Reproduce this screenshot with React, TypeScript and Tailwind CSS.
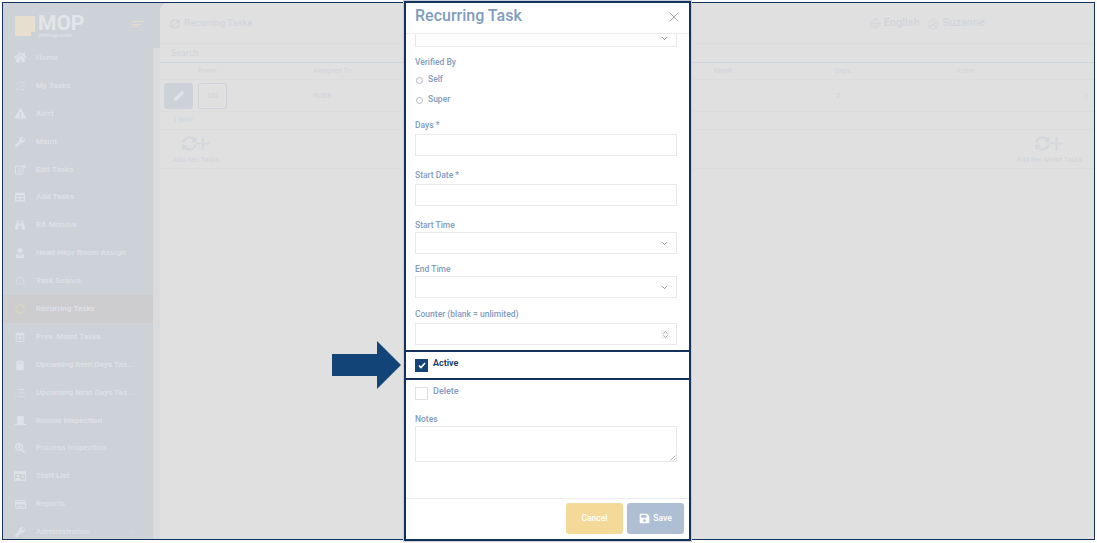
import { type ReactNode } from "react";
import { ChevronDown, ChevronRight, CircleUserRound, Globe, ListChecks, List, Search, X, ChevronsUpDown } from "lucide-react";
import {
  FaBinoculars,
  FaClipboard,
  FaDoorClosed,
  FaExclamationTriangle,
  FaHome,
  FaPen,
  FaRegCalendarPlus,
  FaRegCreditCard,
  FaRegEdit,
  FaRegIdCard,
  FaSave,
  FaSearchPlus,
  FaSyncAlt,
  FaTable,
  FaUserTie,
  FaWrench,
} from "react-icons/fa";

const NAV: { label: string; icon: ReactNode; active?: boolean; chevron?: boolean }[] = [
  { label: "Home", icon: <FaHome size={13} /> },
  { label: "My Tasks", icon: <ListChecks size={12} strokeWidth={1.5} /> },
  { label: "Alert", icon: <FaExclamationTriangle size={11} /> },
  { label: "Maint", icon: <FaWrench size={10} /> },
  { label: "Edit Tasks", icon: <FaRegEdit size={11} /> },
  { label: "Add Tasks", icon: <FaTable size={10} /> },
  { label: "RA Monitor", icon: <FaBinoculars size={10} /> },
  { label: "Head Hkpr Room Assign", icon: <FaUserTie size={10} /> },
  { label: "Task Search", icon: <Search size={11} strokeWidth={1.5} /> },
  { label: "Recurring Tasks", icon: <FaSyncAlt size={10} className="text-[#d8d4c4]" />, active: true },
  { label: "Prev. Maint Tasks", icon: <FaRegCalendarPlus size={10} /> },
  { label: "Upcoming Rent Days Tas...", icon: <FaClipboard size={10} /> },
  { label: "Upcoming Next Days Tas...", icon: <List size={12} strokeWidth={1.5} /> },
  { label: "Rooms Inspection", icon: <FaDoorClosed size={11} /> },
  { label: "Process Inspection", icon: <FaSearchPlus size={10} /> },
  { label: "Staff List", icon: <FaRegIdCard size={12} /> },
  { label: "Reports", icon: <FaRegCreditCard size={11} /> },
  { label: "Administration", icon: <FaWrench size={10} />, chevron: true },
];

function Sidebar() {
  return (
    <aside className="flex w-[157px] shrink-0 flex-col bg-[#cdd2d9]">
      <div className="flex h-[41px] shrink-0 items-start pl-3 pt-[13px]">
        <div className="relative h-[20px] w-[20px] bg-[#e6dfcf]">
          <div className="absolute bottom-0 right-0 h-[4px] w-[4px] bg-[#cdd2d9]" />
        </div>
        <div className="ml-[3px] flex flex-col">
          <span className="text-[21px] font-bold leading-[15px] text-[#e3e5e8]">MOP</span>
          <span className="mt-[1px] text-[6px] leading-[6px] text-[#e3e5e8]">vmmop.com</span>
        </div>
        <div className="ml-[48px] mt-[5px] flex flex-col gap-[1.5px]">
          <div className="h-px w-[11px] bg-[#e0dcc8]" />
          <div className="h-px w-[9px] bg-[#e0dcc8]" />
          <div className="h-px w-[6px] bg-[#e0dcc8]" />
        </div>
      </div>
      <div className="flex min-h-0 flex-1">
        <nav className="w-[150px]">
          {NAV.map((item) => (
            <div
              key={item.label}
              className={`flex h-[27.9px] items-center ${item.active ? "bg-[#cdcdcf]" : ""}`}
            >
              <span className="flex w-[33px] shrink-0 justify-center pl-[1px] text-[#dfe2e6]">{item.icon}</span>
              <span className="truncate text-[8px] font-medium tracking-[0.1px] text-[#dfe2e6]">{item.label}</span>
              {item.chevron && <ChevronDown size={9} className="ml-[38px] text-[#d8dbe0]" />}
            </div>
          ))}
        </nav>
        <div className="mt-[4px] w-[7px] bg-[#dadbdc]" />
      </div>
    </aside>
  );
}

function RecIcon() {
  return (
    <div className="flex h-[16px] items-center text-[#d3d7dd]">
      <FaSyncAlt size={15} />
      <span className="ml-[-1px] text-[26px] font-light leading-[16px]">+</span>
    </div>
  );
}

function Background() {
  return (
    <main className="flex min-w-0 flex-1 flex-col rounded-tl-[8px] bg-[#e0e0e0]">
      <div className="flex h-[41px] shrink-0 items-center border-b border-[#dcdcdc] pl-[10px] pr-[109px] pt-[1px] text-[#d0d4da]">
        <FaSyncAlt size={10} />
        <span className="ml-[4px] text-[9.5px] font-medium">Recurring Tasks</span>
        <Globe size={11} strokeWidth={1.5} className="ml-auto" />
        <span className="ml-[3px] text-[11px] font-medium">English</span>
        <CircleUserRound size={12} strokeWidth={1.5} className="ml-[7px]" />
        <span className="ml-[4px] text-[11px] font-medium">Suzanne</span>
      </div>
      <div className="flex h-[19px] shrink-0 items-center border-b border-[#d0d6df] pl-[11px] pt-[2px] text-[9px] text-[#d0d4da]">
        Search
      </div>
      <div className="grid h-[17px] shrink-0 grid-cols-[115px_401px_121px_121px_1fr] items-center border-b border-[#dcdcdc] pl-[38px] text-[7px] text-[#d0d4da]">
        <span>Room :</span>
        <span>Assigned To :</span>
        <span>Maint :</span>
        <span>Days :</span>
        <span>Active :</span>
      </div>
      <div className="grid h-[32px] shrink-0 grid-cols-[149px_523px_1fr] items-center border-b border-[#dcdcdc] pl-[4px] text-[7.5px] text-[#cfd3d9]">
        <div className="flex">
          <div className="flex h-[26px] w-[29px] items-center justify-center rounded-[3px] bg-[#cdd2d9] text-[#e2e4e7]">
            <FaPen size={10} />
          </div>
          <div className="ml-[5px] flex h-[26px] w-[29px] items-center justify-center rounded-[3px] border border-[#d0d4da]">
            102
          </div>
        </div>
        <span>RUBY</span>
        <div className="flex items-center justify-between">
          <span>2</span>
          <ChevronRight size={10} className="mr-[3px]" />
        </div>
      </div>
      <div className="flex h-[18px] shrink-0 items-center border-b border-[#dcdcdc] pl-[13px] text-[7px] text-[#d0d4da]">
        1 total
      </div>
      <div className="flex h-[39px] shrink-0 items-start justify-between border-b border-[#dcdcdc] pl-[13px] pr-[12px] pt-[5px] text-[7px] text-[#d0d4da]">
        <div className="flex flex-col items-center gap-[4px]">
          <RecIcon />
          <span>Add Rec Tasks</span>
        </div>
        <div className="flex flex-col items-center gap-[4px]">
          <RecIcon />
          <span>Add Rec Maint Tasks</span>
        </div>
      </div>
    </main>
  );
}

function Field({ label, children, className }: { label: string; children: ReactNode; className?: string }) {
  return (
    <div className={className}>
      <div className="text-[8.5px] font-medium leading-[11px] text-[#7f9cbf]">{label}</div>
      {children}
    </div>
  );
}

function Radio({ label }: { label: string }) {
  return (
    <div className="flex h-[20px] items-center pl-[1px]">
      <span className="mt-[2px] h-[7px] w-[7px] rounded-full border border-[#b5b8bc]" />
      <span className="ml-[5px] text-[8.5px] font-medium text-[#7f9cbf]">{label}</span>
    </div>
  );
}

const inputBox = "h-[22px] w-[262px] border border-[#e8e8e8] bg-white";

function Modal() {
  return (
    <div className="absolute bottom-[2px] left-[404px] top-[1px] flex w-[287px] flex-col border-2 border-[#14325c] bg-white outline-1 outline-[#c4ccd8]">
      <div className="relative h-[31px] shrink-0 border-b border-[#ececec] pl-[9px] pt-[1px]">
        <span className="text-[16px] font-medium leading-[20px] text-[#7f9cbf]">Recurring Task</span>
        <X size={16} strokeWidth={1} className="absolute right-[7px] top-[6px] text-[#8a8a8a]" />
      </div>
      <div className="flex min-h-0 flex-1 flex-col">
        <div className="ml-[9px] flex h-[13px] w-[262px] shrink-0 items-start justify-end border border-t-0 border-[#e8e8e8] pr-[7px]">
          <ChevronDown size={9} className="text-[#666]" />
        </div>
        <div className="pl-[9px]">
          <Field label="Verified By" className="mt-[10px]">
            <div className="mt-[1px]">
              <Radio label="Self" />
              <Radio label="Super" />
            </div>
          </Field>
          <Field label="Days *" className="mt-[11px]">
            <div className={`${inputBox} mt-[3px]`} />
          </Field>
          <Field label="Start Date *" className="mt-[14px]">
            <div className={`${inputBox} mt-[3px]`} />
          </Field>
          <Field label="Start Time" className="mt-[14px]">
            <div className={`${inputBox} mt-[1px] flex items-center justify-end pr-[7px]`}>
              <ChevronDown size={9} className="text-[#666]" />
            </div>
          </Field>
          <Field label="End Time" className="mt-[10px]">
            <div className={`${inputBox} mt-[1px] flex items-center justify-end pr-[7px]`}>
              <ChevronDown size={9} className="text-[#666]" />
            </div>
          </Field>
          <Field label="Counter (blank = unlimited)" className="mt-[11px]">
            <div className={`${inputBox} mt-[3px] flex items-center justify-end pr-[6px]`}>
              <ChevronsUpDown size={9} className="bg-[#f4f4f4] text-[#999]" />
            </div>
          </Field>
        </div>
        <div className="mt-[5px] flex h-[30px] shrink-0 items-start border-y-2 border-[#14325c] pl-[9px] pt-[7px]">
          <div className="flex h-[13px] w-[13px] items-center justify-center bg-[#124477] text-white">
            <svg width="8" height="7" viewBox="0 0 8 7" fill="none">
              <path d="M1 3.5 3 5.5 7 1" stroke="currentColor" strokeWidth="1.6" />
            </svg>
          </div>
          <span className="ml-[5px] mt-[-2px] text-[9px] font-semibold leading-[12px] text-[#14325c]">Active</span>
        </div>
        <div className="flex shrink-0 items-start pl-[9px] pt-[7px]">
          <div className="h-[13px] w-[13px] border border-[#e0e0e0]" />
          <span className="ml-[5px] mt-[-2px] text-[9px] font-medium leading-[12px] text-[#7f9cbf]">Delete</span>
        </div>
        <Field label="Notes" className="ml-[9px] mt-[14px]">
          <div className="relative mt-[1px] h-[36px] w-[262px] border border-[#e8e8e8]">
            <svg className="absolute bottom-0 right-0" width="6" height="6" viewBox="0 0 6 6" fill="none">
              <path d="M0.5 5.5 5.5 0.5M3.5 5.5 5.5 3.5" stroke="#999" strokeWidth="0.7" />
            </svg>
          </div>
        </Field>
      </div>
      <div className="flex h-[41px] shrink-0 items-start justify-end gap-[4px] border-t border-[#ececec] pr-[5px] pt-[4px]">
        <button className="h-[31px] w-[57px] rounded-[3px] bg-[#f5d998] text-[8.5px] font-medium text-white">
          Cancel
        </button>
        <button className="flex h-[31px] w-[57px] items-center justify-center gap-[3px] rounded-[3px] bg-[#aebfd4] text-[8.5px] font-medium text-white">
          <FaSave size={11} />
          Save
        </button>
      </div>
    </div>
  );
}

function Arrow() {
  return (
    <svg className="absolute left-[332px] top-[341px]" width="70" height="48" viewBox="0 0 70 48">
      <path d="M0 13H45V0L69 24 45 48V35H0Z" fill="#124477" />
    </svg>
  );
}

export default function App() {
  return (
    <div
      className="relative h-[543px] w-[1097px] overflow-hidden bg-white pb-[3px] pl-[2px] pr-[2px] pt-[2px]"
      style={{ fontFamily: "Roboto, sans-serif" }}
    >
      <div className="flex h-full overflow-hidden border border-[#14325c] bg-[#cdd2d9]">
        <Sidebar />
        <Background />
      </div>
      <Arrow />
      <Modal />
    </div>
  );
}
